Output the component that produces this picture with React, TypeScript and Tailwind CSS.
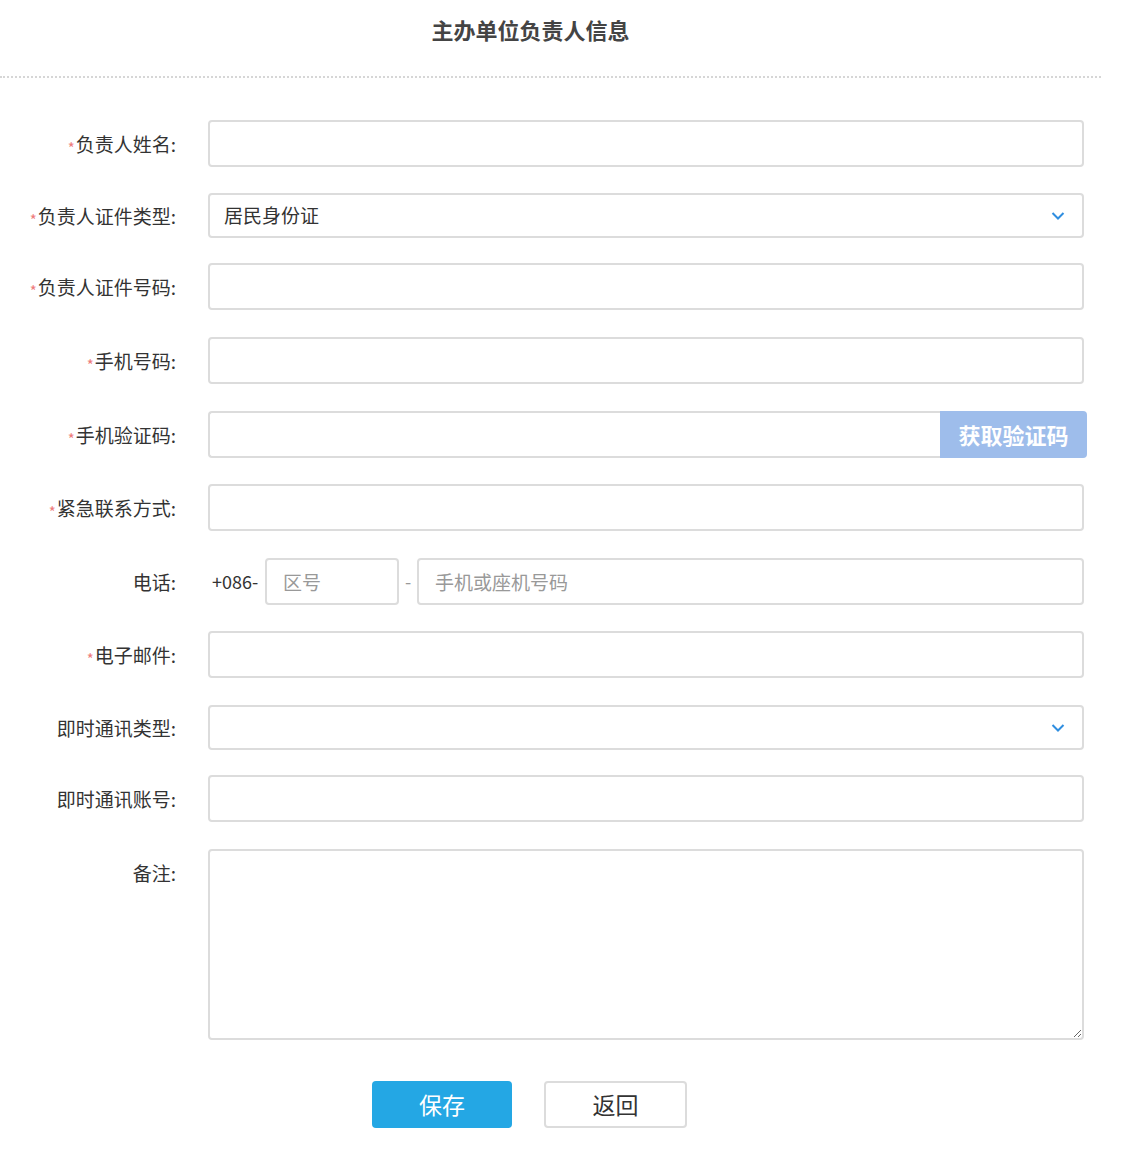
import type { ReactNode } from "react";

const inputCls =
    "h-[47px] w-full rounded-[4px] border-2 border-[#dcdcdc] bg-white px-[14px] text-[19px] text-[#333] outline-none placeholder:text-[#999]";

function Label({ text, required }: { text: string; required?: boolean }) {
    return (
        <div className="flex h-[47px] w-[176px] shrink-0 items-center justify-end text-[19px] leading-none text-[#333]">
            {required && <span className="mr-[1px] mt-[7px] text-[15px] leading-none text-[#ee7b7b]">*</span>}
            {text}:
        </div>
    );
}

function Row({ label, required, children, mb = "mb-[27px]", top }: { label: string; required?: boolean; children: ReactNode; mb?: string; top?: boolean }) {
    return (
        <div className={`flex ${top ? "items-start" : "items-center"} ${mb}`}>
            <Label text={label} required={required} />
            <div className="ml-[32px] w-[876px]">{children}</div>
        </div>
    );
}

function Chevron() {
    return (
        <svg width="14" height="9" viewBox="0 0 14 9" className="absolute right-[17px] top-1/2 -translate-y-1/2">
            <path d="M1.5 1.5 L7 7 L12.5 1.5" fill="none" stroke="#2f8ee0" strokeWidth="2" />
        </svg>
    );
}

function SelectBox({ value }: { value?: string }) {
    return (
        <div className="relative flex h-[45px] w-full items-center rounded-[4px] border-2 border-[#dcdcdc] bg-white px-[14px] text-[19px] text-[#333]">
            {value}
            <Chevron />
        </div>
    );
}

export default function App() {
    return (
        <div className="w-[1121px] bg-white pb-[26px]" style={{ fontFamily: '"Noto Sans CJK SC", sans-serif' }}>
            <div className="w-[1101px] border-b-2 border-dotted border-[#d6d6d6]">
                <h1 className="pr-[40px] pt-[14px] pb-[32px] text-center text-[22px] font-bold leading-[30px] text-[#444]">主办单位负责人信息</h1>
            </div>

            <div className="pt-[42px]">
                <Row label="负责人姓名" required mb="mb-[25px]">
                    <input className={inputCls} />
                </Row>
                <Row label="负责人证件类型" required mb="mb-[24px]">
                    <SelectBox value="居民身份证" />
                </Row>
                <Row label="负责人证件号码" required>
                    <input className={inputCls} />
                </Row>
                <Row label="手机号码" required>
                    <input className={inputCls} />
                </Row>
                <Row label="手机验证码" required mb="mb-[26px]">
                    <div className="flex w-[879px]">
                        <input className="h-[47px] w-[732px] rounded-l-[4px] border-2 border-r-0 border-[#dcdcdc] bg-white px-[14px] text-[19px] outline-none" />
                        <button className="h-[47px] w-[147px] rounded-r-[4px] bg-[#9ebdeb] text-[22px] font-bold text-white">获取验证码</button>
                    </div>
                </Row>
                <Row label="紧急联系方式" required>
                    <input className={inputCls} />
                </Row>
                <Row label="电话" mb="mb-[26px]">
                    <div className="flex items-center">
                        <span className="ml-[4px] w-[53px] text-[18px] text-[#333]">+086-</span>
                        <input placeholder="区号" className="h-[47px] w-[134px] rounded-[4px] border-2 border-[#dcdcdc] bg-white px-[16px] text-[19px] outline-none placeholder:text-[#999]" />
                        <span className="w-[18px] text-center text-[18px] text-[#999]">-</span>
                        <input placeholder="手机或座机号码" className="h-[47px] flex-1 rounded-[4px] border-2 border-[#dcdcdc] bg-white px-[16px] text-[19px] outline-none placeholder:text-[#999]" />
                    </div>
                </Row>
                <Row label="电子邮件" required mb="mb-[26px]">
                    <input className={inputCls} />
                </Row>
                <Row label="即时通讯类型" mb="mb-[24px]">
                    <SelectBox />
                </Row>
                <Row label="即时通讯账号">
                    <input className={inputCls} />
                </Row>
                <Row label="备注" top mb="mb-[41px]">
                    <textarea className="block h-[191px] w-full rounded-[4px] border-2 border-[#dcdcdc] bg-white p-[14px] text-[19px] outline-none" />
                </Row>

                <div className="flex pl-[372px]">
                    <button className="h-[47px] w-[140px] rounded-[4px] bg-[#24a7e4] text-[23px] text-white">保存</button>
                    <button className="ml-[32px] h-[47px] w-[143px] rounded-[4px] border-2 border-[#dcdcdc] bg-white text-[23px] text-[#333]">返回</button>
                </div>
            </div>
        </div>
    );
}
